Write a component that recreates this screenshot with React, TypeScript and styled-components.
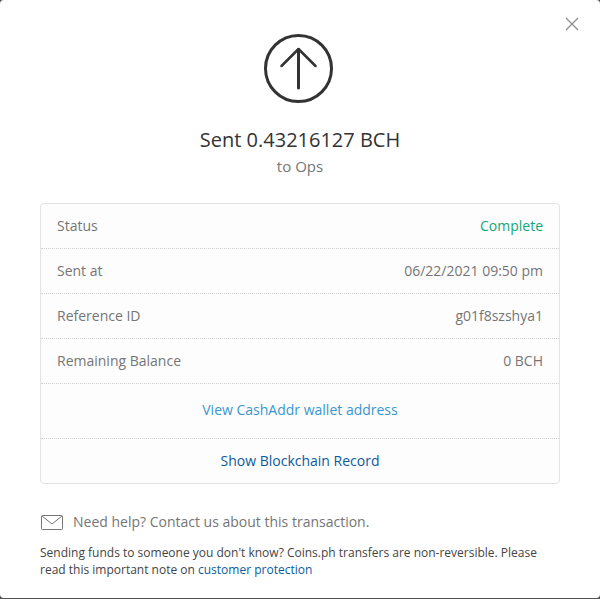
import React from "react";
import styled, { createGlobalStyle } from "styled-components";

const GlobalStyle = createGlobalStyle`
  * { box-sizing: border-box; }
  body {
    margin: 0;
    background: #535353;
    color: #757575;
    font-family: "Open Sans", "Noto Sans", sans-serif;
    font-size: 14px;
    line-height: 20px;
  }
`;

const Dialog = styled.main`
  position: relative;
  padding: 34px 40px 20px;
  background: #fff;
  border-radius: 4px;
  margin-bottom: 1px;
`;

const CloseButton = styled.button`
  position: absolute;
  top: 16px;
  right: 20px;
  display: flex;
  padding: 1px;
  border: 0;
  background: none;
  color: #8c8c8c;
  cursor: pointer;
`;

const Header = styled.header`
  display: flex;
  flex-direction: column;
  align-items: center;
  text-align: center;
`;

const Title = styled.h1`
  margin: 20px 0 0;
  color: #333;
  font-size: 20px;
  font-weight: 400;
  line-height: 28px;
`;

const Recipient = styled.p`
  margin: 2px 0 0;
  font-size: 15px;
  line-height: 20px;
`;

const Card = styled.section`
  margin-top: 27px;
  border: 1px solid #e3e3e3;
  border-radius: 4px;
  background: #fdfdfd;
`;

const Details = styled.dl`
  margin: 0;
`;

const DetailRow = styled.div`
  display: flex;
  justify-content: space-between;
  padding: 12px 16px;
  border-bottom: 1px dotted #d2d2d2;
`;

const Term = styled.dt``;

const Value = styled.dd<{ $success?: boolean }>`
  margin: 0;
  color: ${(p) => (p.$success ? "#13a679" : "inherit")};
`;

const ActionRow = styled.div<{ $tall?: boolean }>`
  padding: ${(p) => (p.$tall ? "16px 16px 18px" : "12px 16px")};
  border-bottom: ${(p) => (p.$tall ? "1px dotted #d2d2d2" : "0")};
  text-align: center;
`;

const Link = styled.a<{ $light?: boolean }>`
  color: ${(p) => (p.$light ? "#3a96d0" : "#0b5a9d")};
  text-decoration: none;
`;

const HelpLink = styled.a`
  display: flex;
  align-items: center;
  gap: 9px;
  margin-top: 28px;
  color: inherit;
  text-decoration: none;
`;

const Note = styled.p`
  margin: 12px 0 0;
  color: #444;
  font-size: 12px;
  line-height: 17px;
`;

const details = [
  { label: "Status", value: "Complete", success: true },
  { label: "Sent at", value: "06/22/2021 09:50 pm" },
  { label: "Reference ID", value: "g01f8szshya1" },
  { label: "Remaining Balance", value: "0 BCH" },
];

function SentIcon() {
  return (
    <svg width="72" height="72" viewBox="0 0 72 72" fill="none" stroke="#333" strokeWidth="3" strokeLinecap="round" strokeLinejoin="round" aria-hidden="true">
      <circle cx="34.5" cy="34.5" r="33" />
      <path d="M34.5 54V15.500" />
      <path d="M17.500 32 34.500 15 51.500 32" strokeWidth="2.500" />
    </svg>
  );
}

function CloseIcon() {
  return (
    <svg width="14" height="14" viewBox="0 0 14 14" fill="none" stroke="currentColor" strokeWidth="1.200" aria-hidden="true">
      <path d="M1 1 13 13M13 1 1 13" />
    </svg>
  );
}

function MailIcon() {
  return (
    <svg width="24" height="16" viewBox="0 0 24 16" fill="none" stroke="#757575" aria-hidden="true">
      <rect x="1.500" y="1.500" width="21" height="14" rx="1" />
      <path d="m2 2 10 8L22 2" />
    </svg>
  );
}

export default function App() {
  return (
    <>
      <GlobalStyle />
      <Dialog role="dialog" aria-labelledby="transaction-title">
        <CloseButton type="button" aria-label="Close">
          <CloseIcon />
        </CloseButton>
        <Header>
          <SentIcon />
          <Title id="transaction-title">Sent 0.43216127 BCH</Title>
          <Recipient>to Ops</Recipient>
        </Header>
        <Card>
          <Details>
            {details.map((d) => (
              <DetailRow key={d.label}>
                <Term>{d.label}</Term>
                <Value $success={d.success}>{d.value}</Value>
              </DetailRow>
            ))}
          </Details>
          <ActionRow $tall>
            <Link $light href="#address">View CashAddr wallet address</Link>
          </ActionRow>
          <ActionRow>
            <Link href="#record">Show Blockchain Record</Link>
          </ActionRow>
        </Card>
        <HelpLink href="#help">
          <MailIcon />
          Need help? Contact us about this transaction.
        </HelpLink>
        <Note>
          Sending funds to someone you don't know? Coins.ph transfers are non-reversible. Please read this important
          note on <Link href="#protection">customer protection</Link>
        </Note>
      </Dialog>
    </>
  );
}
